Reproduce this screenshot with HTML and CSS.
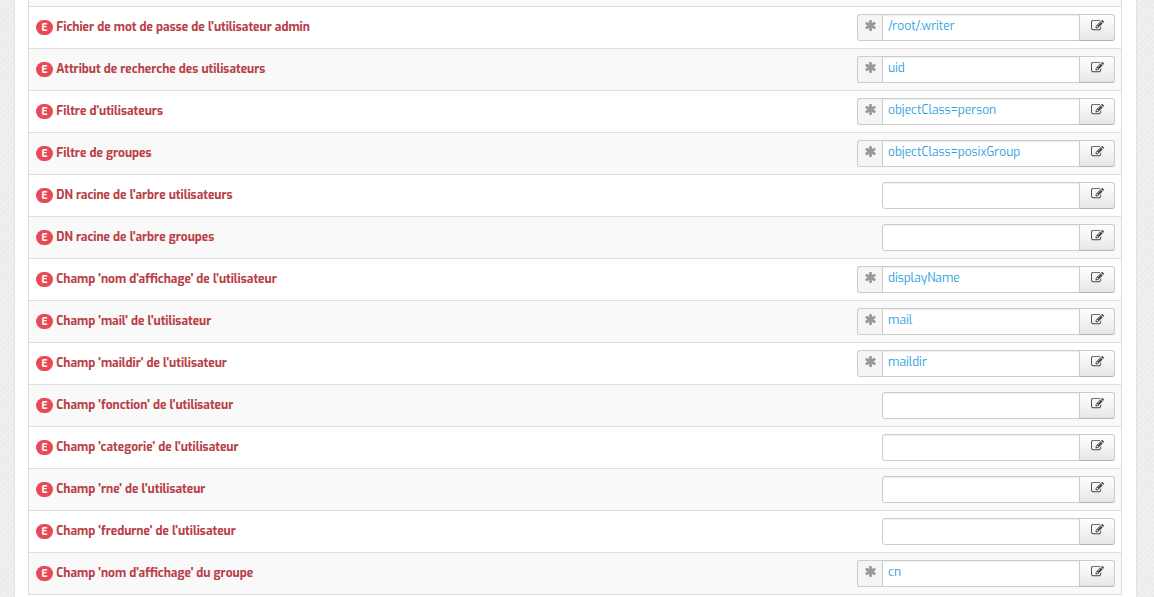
FILE: index.html
```
<!DOCTYPE html>
<html lang="fr">
<head>
    <meta charset="UTF-8">
    <meta name="viewport" content="width=device-width, initial-scale=1.0">
    <title>Configuration</title>
    <link rel="stylesheet" href="styles.css">
</head>
<body>
    <svg class="sprite" aria-hidden="true">
        <symbol id="icon-edit" viewBox="0 0 1792 1792">
            <path d="M888 1184l116-116-152-152-116 116v56h96v96h56zm440-720q-16-16-33 1l-350 350q-17 17-1 33t33-1l350-350q17-17 1-33zm80 594v190q0 119-84.500 203.500t-203.500 84.500h-832q-119 0-203.500-84.500t-84.500-203.500v-832q0-119 84.500-203.500t203.500-84.500h832q63 0 117 25 15 7 18 23 3 17-9 29l-49 49q-14 14-32 8-23-6-45-6h-832q-66 0-113 47t-47 113v832q0 66 47 113t113 47h832q66 0 113-47t47-113v-126q0-13 9-22l64-64q15-15 35-7t20 29zm-96-738l288 288-672 672h-288v-288zm444 132l-92 92-288-288 92-92q28-28 68-28t68 28l152 152q28 28 28 68t-28 68z"/>
        </symbol>
        <symbol id="icon-asterisk" viewBox="0 0 1792 1792">
            <path d="M1546 1050q46 26 59.500 77.500t-12.500 97.500l-64 110q-26 46-77.500 59.500t-97.500-12.500l-266-153v307q0 52-38 90t-90 38h-128q-52 0-90-38t-38-90v-307l-266 153q-46 26-97.500 12.500t-77.500-59.500l-64-110q-26-46-12.500-97.500t59.500-77.500l266-154-266-154q-46-26-59.500-77.500t12.500-97.500l64-110q26-46 77.500-59.500t97.500 12.500l266 153v-307q0-52 38-90t90-38h128q52 0 90 38t38 90v307l266-153q46-26 97.500-12.500t77.500 59.500l64 110q26 46 12.500 97.500t-59.500 77.500l-266 154z"/>
        </symbol>
    </svg>

    <div class="container">
        <table class="table">
            <tbody id="variables">
                <tr class="row-end"><td colspan="2"></td></tr>
            </tbody>
        </table>
    </div>

    <script>
        const variables = [
            { label: "Fichier de mot de passe de l'utilisateur admin", value: "/root/.writer" },
            { label: "Attribut de recherche des utilisateurs", value: "uid" },
            { label: "Filtre d'utilisateurs", value: "objectClass=person" },
            { label: "Filtre de groupes", value: "objectClass=posixGroup" },
            { label: "DN racine de l'arbre utilisateurs", value: "" },
            { label: "DN racine de l'arbre groupes", value: "" },
            { label: "Champ 'nom d'affichage' de l'utilisateur", value: "displayName" },
            { label: "Champ 'mail' de l'utilisateur", value: "mail" },
            { label: "Champ 'maildir' de l'utilisateur", value: "maildir" },
            { label: "Champ 'fonction' de l'utilisateur", value: "" },
            { label: "Champ 'categorie' de l'utilisateur", value: "" },
            { label: "Champ 'rne' de l'utilisateur", value: "" },
            { label: "Champ 'fredurne' de l'utilisateur", value: "" },
            { label: "Champ 'nom d'affichage' du groupe", value: "cn" }
        ];

        const tbody = document.getElementById('variables');
        variables.forEach((variable, i) => {
            const required = variable.value !== "";
            const row = document.createElement('tr');
            row.innerHTML = `
                <td class="name">
                    <span class="badge">E</span>
                    <label for="var${i}">${variable.label}</label>
                </td>
                <td class="value">
                    <div class="input-group">
                        ${required ? '<span class="add-on"><svg class="icon"><use href="#icon-asterisk"/></svg></span>' : ''}
                        <input type="text" id="var${i}" value="${variable.value}">
                        <button type="button" class="btn" aria-label="Modifier"><svg class="icon"><use href="#icon-edit"/></svg></button>
                    </div>
                </td>`;
            tbody.appendChild(row);
        });
    </script>
</body>
</html>
```
FILE: styles.css
```
* {
    box-sizing: border-box;
}

body {
    margin: 0;
    padding: 0 18px 0 15px;
    height: 100vh;
    overflow: hidden;
    font-family: Exo, Roboto, sans-serif;
    font-size: 12px;
    line-height: 20px;
    background: repeating-linear-gradient(135deg, #ebebeb 0, #ebebeb 2px, #f0f0f0 2px, #f0f0f0 4px);
}

.sprite {
    display: none;
}

.container {
    min-height: 100vh;
    padding: 0 14px 0 13px;
    background-color: #fff;
    box-shadow: 0 0 2px rgba(0, 0, 0, 0.15);
}

.table {
    width: 100%;
    border: 1px solid #ddd;
    border-width: 0 1px;
    border-collapse: separate;
    border-spacing: 0;
}

.table td {
    height: 42px;
    padding: 0 6px 0 7px;
    border-bottom: 1px solid #ddd;
}

.table .name {
    padding-bottom: 2px;
}

.table tr:nth-child(odd) td {
    background-color: #f9f9f9;
}

.table .row-end td {
    height: 7px;
}

.badge {
    display: inline-block;
    width: 17px;
    height: 15px;
    border-radius: 8px;
    background-color: #e74955;
    color: #fff;
    font-size: 10px;
    font-weight: bold;
    line-height: 15px;
    text-align: center;
    vertical-align: middle;
}

.name label {
    color: #b94047;
    font-weight: bold;
}

.input-group {
    display: flex;
    justify-content: flex-end;
    height: 27px;
}

.add-on {
    display: flex;
    justify-content: center;
    width: 25px;
    padding-top: 4px;
    border: 1px solid #ccc;
    border-right: none;
    border-radius: 3px 0 0 3px;
    background-color: #f5f5f5;
    color: #999;
}

.icon {
    width: 13px;
    height: 13px;
    fill: currentColor;
}

.input-group input {
    width: 198px;
    margin: 0 -1px 0 0;
    padding: 0 5px 4px;
    border: 1px solid #ccc;
    border-radius: 3px 0 0 3px;
    background-color: #fff;
    box-shadow: inset 0 1px 1px rgba(0, 0, 0, 0.075);
    color: #2d9fdf;
    font: inherit;
}

.add-on + input {
    border-radius: 0;
}

.btn {
    display: flex;
    justify-content: center;
    width: 36px;
    padding: 4px 0 0;
    border: 1px solid #ccc;
    border-bottom-color: #b3b3b3;
    border-radius: 0 3px 3px 0;
    background: linear-gradient(#fff, #e6e6e6);
    color: #444;
    cursor: pointer;
}

.btn:hover {
    background: #e6e6e6;
}
```
